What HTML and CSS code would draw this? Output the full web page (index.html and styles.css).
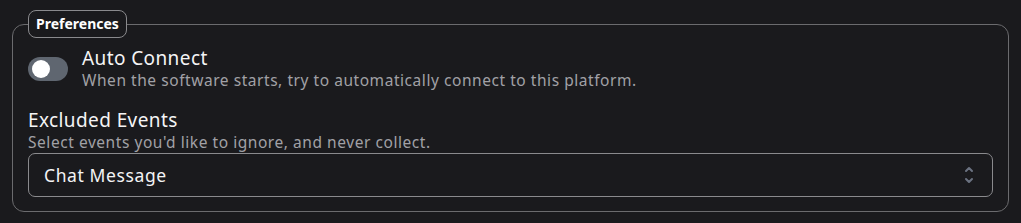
FILE: index.html
```html
<!DOCTYPE html>
<html lang="en">
  <head>
    <meta charset="UTF-8" />
    <link rel="stylesheet" href="styles.css">
    <title>Preferences</title>
  </head>
  <body>
    <fieldset class="prefs">
      <legend>Preferences</legend>

      <div class="option">
        <label class="toggle">
          <input type="checkbox" />
          <span class="knob"></span>
        </label>
        <div class="option-text">
          <div class="title">Auto Connect</div>
          <div class="desc">When the software starts, try to automatically connect to this platform.</div>
        </div>
      </div>

      <div class="field">
        <div class="title">Excluded Events</div>
        <div class="desc">Select events you'd like to ignore, and never collect.</div>
        <div class="select">
          <span>Chat Message</span>
          <svg class="chevrons" width="10" height="20" viewBox="0 0 10 20" fill="none" stroke="#6b7280" stroke-width="2" stroke-linecap="round" stroke-linejoin="round">
            <path d="M2 6 L5 3 L8 6" />
            <path d="M2 14 L5 17 L8 14" />
          </svg>
        </div>
      </div>
    </fieldset>
  </body>
</html>
```

FILE: styles.css
```css
* {
  box-sizing: border-box;
}

body {
  background-color: #1a1a1d;
  color: #f4f4f5;
  font-family: "Noto Sans", sans-serif;
  margin: 0;
  padding: 10px 12px 0 12px;
}

.prefs {
  border: 1px solid #6b6b6e;
  border-radius: 12px;
  margin: 0;
  padding: 9px 15px 14px 15px;
  min-width: 0;
}

.prefs legend {
  border: 1px solid #8a8a8d;
  border-radius: 8px;
  padding: 0 7px;
  height: 28px;
  line-height: 26px;
  font-size: 14px;
  font-weight: 700;
  color: #fff;
}

.option {
  display: flex;
  align-items: center;
}

.toggle {
  position: relative;
  width: 40px;
  height: 24px;
  border-radius: 12px;
  background-color: #5f6670;
  margin-right: 14px;
  flex-shrink: 0;
}

.toggle input {
  display: none;
}

.toggle .knob {
  position: absolute;
  left: 4px;
  top: 3px;
  width: 18px;
  height: 18px;
  border-radius: 50%;
  background-color: #fff;
}

.title {
  font-size: 19px;
  line-height: 22px;
  letter-spacing: 0.4px;
}

.desc {
  font-size: 15.5px;
  line-height: 22px;
  letter-spacing: 0.55px;
  color: #a1a1a6;
}

.field {
  margin-top: 18px;
}

.select {
  height: 44px;
  border: 1px solid #8a8a8d;
  border-radius: 7px;
  display: flex;
  align-items: center;
  justify-content: space-between;
  padding: 0 18px 0 15px;
  font-size: 17.5px;
  letter-spacing: 0.6px;
}
```
